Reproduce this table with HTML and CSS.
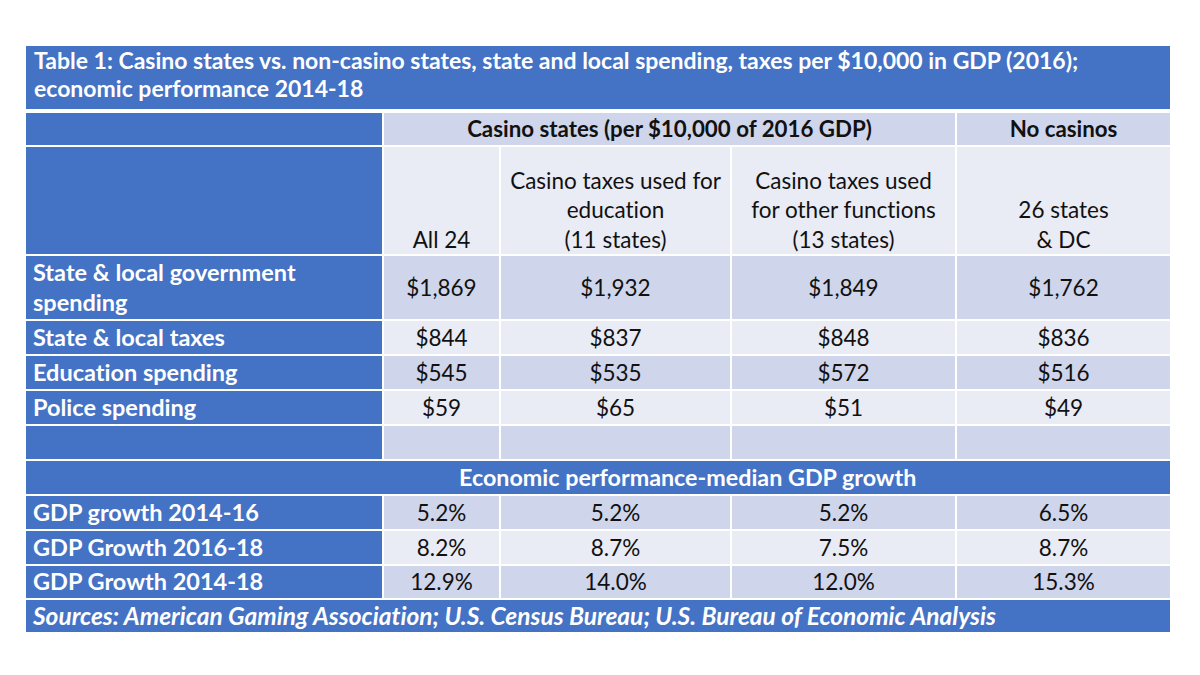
FILE: index.html
```html
<!DOCTYPE html>
<html>
<head>
<meta charset="utf-8">
<link rel="stylesheet" href="styles.css">
</head>
<body>
<table class="t">
  <colgroup>
    <col class="c0"><col class="c1"><col class="c2"><col class="c3"><col class="c4">
  </colgroup>
  <tr class="r-title">
    <td colspan="5" class="title">Table 1: Casino states vs. non-casino states, state and local spending, taxes per $10,000 in GDP (2016);<br>economic performance 2014-18</td>
  </tr>
  <tr class="r-grp">
    <td class="lab"></td>
    <td colspan="3" class="dk hb">Casino states (per $10,000 of 2016 GDP)</td>
    <td class="dk hb">No casinos</td>
  </tr>
  <tr class="r-head">
    <td class="lab"></td>
    <td class="lt hd">All 24</td>
    <td class="lt hd">Casino taxes used for<br>education<br>(11 states)</td>
    <td class="lt hd">Casino taxes used<br>for other functions<br>(13 states)</td>
    <td class="lt hd">26 states<br>&amp; DC</td>
  </tr>
  <tr class="r-two">
    <td class="lab">State &amp; local government<br>spending</td>
    <td class="dk num">$1,869</td><td class="dk num">$1,932</td><td class="dk num">$1,849</td><td class="dk num">$1,762</td>
  </tr>
  <tr class="r-one">
    <td class="lab">State &amp; local taxes</td>
    <td class="lt num">$844</td><td class="lt num">$837</td><td class="lt num">$848</td><td class="lt num">$836</td>
  </tr>
  <tr class="r-one">
    <td class="lab">Education spending</td>
    <td class="dk num">$545</td><td class="dk num">$535</td><td class="dk num">$572</td><td class="dk num">$516</td>
  </tr>
  <tr class="r-one">
    <td class="lab">Police spending</td>
    <td class="lt num">$59</td><td class="lt num">$65</td><td class="lt num">$51</td><td class="lt num">$49</td>
  </tr>
  <tr class="r-one">
    <td class="lab"></td>
    <td class="dk num"></td><td class="dk num"></td><td class="dk num"></td><td class="dk num"></td>
  </tr>
  <tr class="r-one">
    <td colspan="5" class="econ">Economic performance-median GDP growth</td>
  </tr>
  <tr class="r-one">
    <td class="lab">GDP growth 2014-16</td>
    <td class="dk num">5.2%</td><td class="dk num">5.2%</td><td class="dk num">5.2%</td><td class="dk num">6.5%</td>
  </tr>
  <tr class="r-one">
    <td class="lab">GDP Growth 2016-18</td>
    <td class="lt num">8.2%</td><td class="lt num">8.7%</td><td class="lt num">7.5%</td><td class="lt num">8.7%</td>
  </tr>
  <tr class="r-last">
    <td class="lab">GDP Growth 2014-18</td>
    <td class="dk num">12.9%</td><td class="dk num">14.0%</td><td class="dk num">12.0%</td><td class="dk num">15.3%</td>
  </tr>
  <tr class="r-last">
    <td colspan="5" class="src">Sources: American Gaming Association; U.S. Census Bureau; U.S. Bureau of Economic Analysis</td>
  </tr>
</table>
</body>
</html>
```
FILE: styles.css
```css
html, body {
  margin: 0;
  padding: 0;
  background: #ffffff;
}
body {
  font-family: "Lato", "Liberation Sans", sans-serif;
  font-size: 22.5px;
  color: #111;
  font-variant-ligatures: none;
}
.t {
  margin: 44px 0 0 24px;
  border-collapse: collapse;
  table-layout: fixed;
  width: 1146px;
}
.c0 { width: 358px; }
.c1 { width: 117px; }
.c2 { width: 231px; }
.c3 { width: 225px; }
.c4 { width: 215px; }
.t td {
  border: 2px solid #ffffff;
  padding: 0;
  line-height: 29.5px;
  white-space: nowrap;
}
.r-title td {
  height: 63px;
  border-bottom: 4px solid #ffffff;
}
.r-grp td { height: 32px; }
.r-head td { height: 107px; }
.r-two td { height: 63px; }
.r-one td { height: 33px; }
.r-last td { height: 32px; }
.title {
  background: #4472c4;
  color: #ffffff;
  font-weight: 700;
  font-size: 23px;
  padding: 0 0 0 8px !important;
  line-height: 28px !important;
  vertical-align: top;
}
.lab {
  background: #4472c4;
  color: #ffffff;
  font-weight: 700;
  font-size: 23.5px;
  padding-left: 7px !important;
  vertical-align: middle;
}
.dk { background: #cfd5ea; }
.lt { background: #e9ebf5; }
.hb {
  font-weight: 700;
  font-size: 22.3px;
  text-align: center;
  vertical-align: middle;
}
.hd {
  text-align: center;
  vertical-align: bottom;
  padding-bottom: 0 !important;
}
.num {
  text-align: center;
  vertical-align: middle;
}
.econ {
  background: #4472c4;
  color: #ffffff;
  font-weight: 700;
  font-size: 23.3px;
  padding-left: 433px !important;
  vertical-align: middle;
}
.src {
  background: #4472c4;
  color: #ffffff;
  font-weight: 700;
  font-style: italic;
  font-size: 24.5px;
  padding-left: 7px !important;
  vertical-align: middle;
}
```
